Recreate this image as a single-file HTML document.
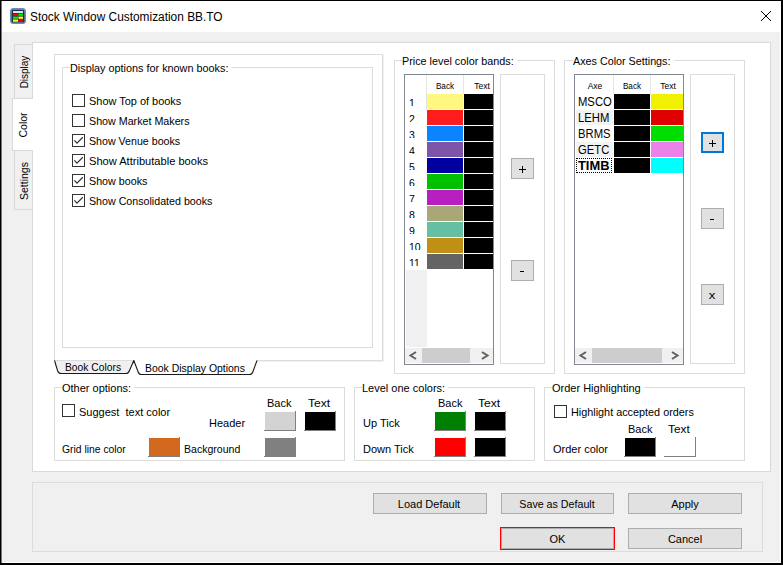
<!DOCTYPE html>
<html><head><meta charset="utf-8"><style>
html,body{margin:0;padding:0;}
body{width:783px;height:565px;position:relative;overflow:hidden;background:#f0f0f0;font-family:"Liberation Sans", sans-serif;color:#000;}
body>div,body>svg{position:absolute;}
.t{white-space:pre;}
</style></head><body>
<div style="left:0px;top:0px;width:783px;height:32px;background:#fff;"></div>
<div style="left:0px;top:0px;width:783px;height:1px;background:#000;"></div>
<div style="left:0px;top:0px;width:1px;height:565px;background:#000;"></div>
<div style="left:1px;top:1px;width:1px;height:564px;background:#777;"></div>
<div style="left:781px;top:0px;width:2px;height:565px;background:#000;"></div>
<div style="left:780px;top:1px;width:1px;height:562px;background:#fff;"></div>
<div style="left:0px;top:563px;width:783px;height:2px;background:#000;"></div>
<div style="left:2px;top:562px;width:779px;height:1px;background:#fff;"></div>
<svg style="left:10px;top:8px" width="16" height="16">
<rect x="0.5" y="0.5" width="15" height="15" rx="2.5" fill="#4f6f9a" stroke="#6d8cb4"/>
<rect x="1.5" y="1.5" width="13" height="3" fill="#9fb4cc" opacity="0.6"/>
<rect x="2" y="2" width="12" height="12" fill="#1e2c44"/>
<rect x="3" y="3" width="10" height="2" fill="#d4e0ff"/>
<rect x="3" y="5.6" width="5" height="2.2" fill="#ff0000"/><rect x="8.4" y="5.6" width="4.6" height="2.2" fill="#00f000"/>
<rect x="3" y="8.6" width="5" height="2.2" fill="#00f000"/><rect x="8.4" y="8.6" width="4.6" height="2.2" fill="#ffff00"/>
<rect x="3" y="11.5" width="5" height="2.2" fill="#ffff00"/><rect x="8.4" y="11.5" width="4.6" height="2.2" fill="#ff0000"/>
</svg>
<div class="t" style="left:30px;top:11px;font-size:12px;line-height:13.80px;transform:scaleX(0.99);transform-origin:0 0;">Stock Window Customization BB.TO</div>
<svg style="left:761px;top:11px" width="10" height="10" shape-rendering="crispEdges"><rect x="0" y="0" width="1" height="1"/><rect x="9" y="0" width="1" height="1"/><rect x="1" y="1" width="1" height="1"/><rect x="8" y="1" width="1" height="1"/><rect x="2" y="2" width="1" height="1"/><rect x="7" y="2" width="1" height="1"/><rect x="3" y="3" width="1" height="1"/><rect x="6" y="3" width="1" height="1"/><rect x="4" y="4" width="1" height="1"/><rect x="5" y="4" width="1" height="1"/><rect x="5" y="5" width="1" height="1"/><rect x="4" y="5" width="1" height="1"/><rect x="6" y="6" width="1" height="1"/><rect x="3" y="6" width="1" height="1"/><rect x="7" y="7" width="1" height="1"/><rect x="2" y="7" width="1" height="1"/><rect x="8" y="8" width="1" height="1"/><rect x="1" y="8" width="1" height="1"/><rect x="9" y="9" width="1" height="1"/><rect x="0" y="9" width="1" height="1"/></svg>
<div style="left:32px;top:42px;width:739px;height:430px;background:#fff;border:1px solid #d9d9d9;box-sizing:border-box;"></div>
<div style="left:14px;top:44px;width:18px;height:55px;background:#f0f0f0;border:1px solid #d9d9d9;border-right:none;box-sizing:border-box;"></div>
<div style="left:14px;top:150px;width:18px;height:60px;background:#f0f0f0;border:1px solid #d9d9d9;border-right:none;box-sizing:border-box;"></div>
<div style="left:12px;top:98px;width:21px;height:53px;background:#fff;border:1px solid #d9d9d9;border-right:none;box-sizing:border-box;"></div>
<div style="left:32px;top:99px;width:1px;height:51px;background:#fff;"></div>
<div class="t" style="left:-26px;top:65.3px;width:100px;height:14px;line-height:14px;text-align:center;font-size:10.5px;transform:rotate(-90deg) scaleX(0.95)">Display</div>
<div class="t" style="left:-27px;top:118px;width:100px;height:14px;line-height:14px;text-align:center;font-size:10.5px;transform:rotate(-90deg) scaleX(1)">Color</div>
<div class="t" style="left:-26px;top:173.5px;width:100px;height:14px;line-height:14px;text-align:center;font-size:10.5px;transform:rotate(-90deg) scaleX(1)">Settings</div>
<div style="left:54px;top:54px;width:329px;height:307px;border:1px solid #dcdcdc;box-sizing:border-box;"></div>
<div style="left:383px;top:55px;width:1px;height:307px;background:#f0f0f0;"></div>
<div style="left:55px;top:361px;width:329px;height:1px;background:#f0f0f0;"></div>
<div style="left:62px;top:67px;width:311px;height:281px;border:1px solid #dcdcdc;box-sizing:border-box;"></div>
<div class="t" style="left:70px;top:62px;font-size:11px;line-height:12.65px;transform:scaleX(0.985);transform-origin:0 0;background:#fff;padding:0 3px 0 0;">Display options for known books:</div>
<div style="left:72px;top:94px;width:13px;height:13px;border:1px solid #333;box-sizing:border-box;background:#fff;"></div>
<div class="t" style="left:89px;top:95px;font-size:11px;line-height:12.65px;transform:scaleX(0.995);transform-origin:0 0;">Show Top of books</div>
<div style="left:72px;top:114px;width:13px;height:13px;border:1px solid #333;box-sizing:border-box;background:#fff;"></div>
<div class="t" style="left:89px;top:115px;font-size:11px;line-height:12.65px;transform:scaleX(0.973);transform-origin:0 0;">Show Market Makers</div>
<div style="left:72px;top:134px;width:13px;height:13px;border:1px solid #333;box-sizing:border-box;background:#fff;"></div>
<svg style="left:72px;top:134px" width="13" height="13"><path d="M2.4 6.4 L5 9.1 L10.8 3.3" fill="none" stroke="#333" stroke-width="1.25"/></svg>
<div class="t" style="left:89px;top:135px;font-size:11px;line-height:12.65px;transform:scaleX(0.968);transform-origin:0 0;">Show Venue books</div>
<div style="left:72px;top:154px;width:13px;height:13px;border:1px solid #333;box-sizing:border-box;background:#fff;"></div>
<svg style="left:72px;top:154px" width="13" height="13"><path d="M2.4 6.4 L5 9.1 L10.8 3.3" fill="none" stroke="#333" stroke-width="1.25"/></svg>
<div class="t" style="left:89px;top:155px;font-size:11px;line-height:12.65px;transform:scaleX(1.008);transform-origin:0 0;">Show Attributable books</div>
<div style="left:72px;top:174px;width:13px;height:13px;border:1px solid #333;box-sizing:border-box;background:#fff;"></div>
<svg style="left:72px;top:174px" width="13" height="13"><path d="M2.4 6.4 L5 9.1 L10.8 3.3" fill="none" stroke="#333" stroke-width="1.25"/></svg>
<div class="t" style="left:89px;top:175px;font-size:11px;line-height:12.65px;transform:scaleX(0.975);transform-origin:0 0;">Show books</div>
<div style="left:72px;top:194px;width:13px;height:13px;border:1px solid #333;box-sizing:border-box;background:#fff;"></div>
<svg style="left:72px;top:194px" width="13" height="13"><path d="M2.4 6.4 L5 9.1 L10.8 3.3" fill="none" stroke="#333" stroke-width="1.25"/></svg>
<div class="t" style="left:89px;top:195px;font-size:11px;line-height:12.65px;transform:scaleX(0.97);transform-origin:0 0;">Show Consolidated books</div>
<svg style="left:0;top:0" width="783" height="565">
<rect x="135" y="360" width="122" height="2" fill="#fff"/>
<path d="M54.8 361 L57.5 370.5 Q58.5 373.5 61 373.5 L126 373.5 Q128.5 373.5 129.5 370.5 L133.6 361 Z" fill="#f0f0f0"/>
<rect x="55" y="360" width="79" height="1" fill="#dcdcdc"/>
<path d="M54.5 360.5 L57.5 370.5 Q58.5 373.5 61 373.5 L126 373.5 Q128.5 373.5 129.5 370.5 L133.8 360.5 L137.8 371 Q138.8 374.5 141.5 374.5 L249.5 374.5 Q252 374.5 253 371.5 L257 360.5" fill="none" stroke="#1a1a1a" stroke-width="1.1" stroke-linejoin="round"/>
</svg>
<div class="t" style="left:65px;top:361px;font-size:11px;line-height:12.65px;transform:scaleX(0.935);transform-origin:0 0;">Book Colors</div>
<div class="t" style="left:145px;top:362px;font-size:11px;line-height:12.65px;transform:scaleX(0.95);transform-origin:0 0;">Book Display Options</div>
<div style="left:394px;top:60px;width:161px;height:314px;border:1px solid #dcdcdc;box-sizing:border-box;"></div>
<div class="t" style="left:402px;top:55px;font-size:11px;line-height:12.65px;transform:scaleX(0.982);transform-origin:0 0;background:#fff;padding:0 3px 0 0;">Price level color bands:</div>
<div style="left:404px;top:74px;width:90px;height:291px;border:1px solid #828790;box-sizing:border-box;background:#fff;"></div>
<div style="left:426px;top:75px;width:1px;height:35px;background:#e5e5e5;"></div>
<div style="left:463px;top:75px;width:1px;height:19px;background:#e5e5e5;"></div>
<div class="t" style="left:295px;width:300px;text-align:center;top:81px;font-size:9.5px;line-height:10.92px;transform:scaleX(0.86);">Back</div>
<div class="t" style="left:331.5px;width:300px;text-align:center;top:81px;font-size:9.5px;line-height:10.92px;transform:scaleX(0.9);">Text</div>
<div style="left:427px;top:94px;width:36px;height:15px;background:#fff77f;"></div>
<div style="left:464px;top:94px;width:29px;height:15px;background:#000;"></div>
<div style="left:409px;top:99px;width:16px;height:7px;overflow:hidden"><div class="t" style="position:absolute;left:0;top:-2px;font-size:10.5px;line-height:12px">1</div></div>
<div style="left:427px;top:110px;width:36px;height:15px;background:#fe1c1c;"></div>
<div style="left:464px;top:110px;width:29px;height:15px;background:#000;"></div>
<div style="left:409px;top:115px;width:16px;height:7px;overflow:hidden"><div class="t" style="position:absolute;left:0;top:-2px;font-size:10.5px;line-height:12px">2</div></div>
<div style="left:427px;top:126px;width:36px;height:15px;background:#0a84ff;"></div>
<div style="left:464px;top:126px;width:29px;height:15px;background:#000;"></div>
<div style="left:409px;top:131px;width:16px;height:7px;overflow:hidden"><div class="t" style="position:absolute;left:0;top:-2px;font-size:10.5px;line-height:12px">3</div></div>
<div style="left:427px;top:142px;width:36px;height:15px;background:#7c55a8;"></div>
<div style="left:464px;top:142px;width:29px;height:15px;background:#000;"></div>
<div style="left:409px;top:147px;width:16px;height:7px;overflow:hidden"><div class="t" style="position:absolute;left:0;top:-2px;font-size:10.5px;line-height:12px">4</div></div>
<div style="left:427px;top:158px;width:36px;height:15px;background:#0000a0;"></div>
<div style="left:464px;top:158px;width:29px;height:15px;background:#000;"></div>
<div style="left:409px;top:163px;width:16px;height:7px;overflow:hidden"><div class="t" style="position:absolute;left:0;top:-2px;font-size:10.5px;line-height:12px">5</div></div>
<div style="left:427px;top:174px;width:36px;height:15px;background:#00c000;"></div>
<div style="left:464px;top:174px;width:29px;height:15px;background:#000;"></div>
<div style="left:409px;top:179px;width:16px;height:7px;overflow:hidden"><div class="t" style="position:absolute;left:0;top:-2px;font-size:10.5px;line-height:12px">6</div></div>
<div style="left:427px;top:190px;width:36px;height:15px;background:#b71fc0;"></div>
<div style="left:464px;top:190px;width:29px;height:15px;background:#000;"></div>
<div style="left:409px;top:195px;width:16px;height:7px;overflow:hidden"><div class="t" style="position:absolute;left:0;top:-2px;font-size:10.5px;line-height:12px">7</div></div>
<div style="left:427px;top:206px;width:36px;height:15px;background:#a9a777;"></div>
<div style="left:464px;top:206px;width:29px;height:15px;background:#000;"></div>
<div style="left:409px;top:211px;width:16px;height:7px;overflow:hidden"><div class="t" style="position:absolute;left:0;top:-2px;font-size:10.5px;line-height:12px">8</div></div>
<div style="left:427px;top:222px;width:36px;height:15px;background:#66bfa3;"></div>
<div style="left:464px;top:222px;width:29px;height:15px;background:#000;"></div>
<div style="left:409px;top:227px;width:16px;height:7px;overflow:hidden"><div class="t" style="position:absolute;left:0;top:-2px;font-size:10.5px;line-height:12px">9</div></div>
<div style="left:427px;top:238px;width:36px;height:15px;background:#bf9014;"></div>
<div style="left:464px;top:238px;width:29px;height:15px;background:#000;"></div>
<div style="left:409px;top:243px;width:16px;height:7px;overflow:hidden"><div class="t" style="position:absolute;left:0;top:-2px;font-size:10.5px;line-height:12px">10</div></div>
<div style="left:427px;top:254px;width:36px;height:15px;background:#646464;"></div>
<div style="left:464px;top:254px;width:29px;height:15px;background:#000;"></div>
<div style="left:409px;top:259px;width:16px;height:7px;overflow:hidden"><div class="t" style="position:absolute;left:0;top:-2px;font-size:10.5px;line-height:12px">11</div></div>
<div style="left:406px;top:270px;width:21px;height:77px;background:#f0f0f0;"></div>
<div style="left:405px;top:348px;width:88px;height:15px;background:#f0f0f0;"></div>
<div style="left:422px;top:348px;width:48px;height:15px;background:#cdcdcd;"></div>
<div style="left:500px;top:74px;width:45px;height:290px;border:1px solid #dcdcdc;box-sizing:border-box;"></div>
<div style="left:511px;top:158px;width:23px;height:21px;background:#e1e1e1;box-sizing:border-box;border:1px solid #adadad;"></div>
<div style="left:519px;top:169px;width:7px;height:1px;background:#000;"></div>
<div style="left:522px;top:166px;width:1px;height:7px;background:#000;"></div>
<div style="left:511px;top:260px;width:23px;height:21px;background:#e1e1e1;box-sizing:border-box;border:1px solid #adadad;"></div>
<div style="left:520px;top:271px;width:4px;height:1px;background:#000;"></div>
<div style="left:564px;top:60px;width:181px;height:314px;border:1px solid #dcdcdc;box-sizing:border-box;"></div>
<div class="t" style="left:573px;top:55px;font-size:11px;line-height:12.65px;transform:scaleX(0.978);transform-origin:0 0;background:#fff;padding:0 3px 0 0;">Axes Color Settings:</div>
<div style="left:574px;top:74px;width:110px;height:291px;border:1px solid #828790;box-sizing:border-box;background:#fff;"></div>
<div style="left:613px;top:75px;width:1px;height:19px;background:#e5e5e5;"></div>
<div style="left:650px;top:75px;width:1px;height:19px;background:#e5e5e5;"></div>
<div class="t" style="left:444.5px;width:300px;text-align:center;top:81px;font-size:9.5px;line-height:10.92px;transform:scaleX(0.9);">Axe</div>
<div class="t" style="left:482px;width:300px;text-align:center;top:81px;font-size:9.5px;line-height:10.92px;transform:scaleX(0.86);">Back</div>
<div class="t" style="left:518px;width:300px;text-align:center;top:81px;font-size:9.5px;line-height:10.92px;transform:scaleX(0.9);">Text</div>
<div style="left:614px;top:94px;width:36px;height:15px;background:#000;"></div>
<div style="left:651px;top:94px;width:32px;height:15px;background:#f0f000;"></div>
<div class="t" style="left:578px;top:95px;font-size:12.5px;line-height:14.37px;transform:scaleX(0.9);transform-origin:0 0;">MSCO</div>
<div style="left:576px;top:110px;width:37px;height:15px;background:#f3f3f3;"></div>
<div style="left:614px;top:110px;width:36px;height:15px;background:#000;"></div>
<div style="left:651px;top:110px;width:32px;height:15px;background:#e00000;"></div>
<div class="t" style="left:578px;top:111px;font-size:12.5px;line-height:14.37px;transform:scaleX(0.9);transform-origin:0 0;">LEHM</div>
<div style="left:614px;top:126px;width:36px;height:15px;background:#000;"></div>
<div style="left:651px;top:126px;width:32px;height:15px;background:#00dd00;"></div>
<div class="t" style="left:578px;top:127px;font-size:12.5px;line-height:14.37px;transform:scaleX(0.9);transform-origin:0 0;">BRMS</div>
<div style="left:576px;top:142px;width:37px;height:15px;background:#f3f3f3;"></div>
<div style="left:614px;top:142px;width:36px;height:15px;background:#000;"></div>
<div style="left:651px;top:142px;width:32px;height:15px;background:#ea82ea;"></div>
<div class="t" style="left:578px;top:143px;font-size:12.5px;line-height:14.37px;transform:scaleX(0.9);transform-origin:0 0;">GETC</div>
<div style="left:614px;top:158px;width:36px;height:15px;background:#000;"></div>
<div style="left:651px;top:158px;width:32px;height:15px;background:#00ffff;"></div>
<div style="left:576px;top:158px;width:36px;height:15px;border:1px dotted #000;box-sizing:border-box;"></div>
<div class="t" style="left:578px;top:159px;font-size:12.5px;line-height:14.37px;transform:scaleX(1.03);transform-origin:0 0;font-weight:bold;">TIMB</div>
<div style="left:575px;top:348px;width:108px;height:15px;background:#f0f0f0;"></div>
<div style="left:592px;top:348px;width:70px;height:15px;background:#cdcdcd;"></div>
<div style="left:690px;top:74px;width:45px;height:290px;border:1px solid #dcdcdc;box-sizing:border-box;"></div>
<div style="left:701px;top:132px;width:23px;height:21px;background:#e1e1e1;box-sizing:border-box;border:2px solid #0078d7;"></div>
<div style="left:709px;top:143px;width:7px;height:1px;background:#000;"></div>
<div style="left:712px;top:140px;width:1px;height:7px;background:#000;"></div>
<div style="left:701px;top:208px;width:23px;height:21px;background:#e1e1e1;box-sizing:border-box;border:1px solid #adadad;"></div>
<div style="left:710px;top:219px;width:4px;height:1px;background:#000;"></div>
<div style="left:701px;top:284px;width:23px;height:21px;background:#e1e1e1;box-sizing:border-box;border:1px solid #adadad;"></div>
<div class="t" style="left:562.0px;width:300px;text-align:center;top:289px;font-size:11px;line-height:12.65px;transform:scaleX(1.2);">x</div>
<svg style="left:0;top:0" width="783" height="565"><path d="M416 352.0 L410.5 355.5 L416 359.0 M482 352.0 L487.5 355.5 L482 359.0 M586 352.0 L580.5 355.5 L586 359.0 M672 352.0 L677.5 355.5 L672 359.0" fill="none" stroke="#606060" stroke-width="2"/></svg>
<div style="left:54px;top:387px;width:291px;height:74px;border:1px solid #dcdcdc;box-sizing:border-box;"></div>
<div class="t" style="left:62px;top:382px;font-size:11px;line-height:12.65px;background:#fff;padding:0 3px 0 0;">Other options:</div>
<div style="left:62px;top:404px;width:13px;height:13px;border:1px solid #333;box-sizing:border-box;background:#fff;"></div>
<div class="t" style="left:79px;top:406px;font-size:11px;line-height:12.65px;">Suggest&nbsp; text color</div>
<div class="t" style="left:62px;top:443px;font-size:11px;line-height:12.65px;transform:scaleX(0.94);transform-origin:0 0;">Grid line color</div>
<div class="t" style="left:209px;top:417px;font-size:11px;line-height:12.65px;">Header</div>
<div class="t" style="left:184px;top:443px;font-size:11px;line-height:12.65px;transform:scaleX(0.96);transform-origin:0 0;">Background</div>
<div class="t" style="left:267px;top:397px;font-size:11px;line-height:12.65px;">Back</div>
<div class="t" style="left:308px;top:397px;font-size:11px;line-height:12.65px;transform:scaleX(1.1);transform-origin:0 0;">Text</div>
<div style="left:149px;top:438px;width:30px;height:18px;background:#d2691e;"></div>
<div style="left:179px;top:437px;width:1px;height:20px;background:#808080;"></div>
<div style="left:148px;top:456px;width:31px;height:1px;background:#808080;"></div>
<div style="left:265px;top:412px;width:30px;height:18px;background:#d3d3d3;"></div>
<div style="left:295px;top:411px;width:1px;height:20px;background:#808080;"></div>
<div style="left:264px;top:430px;width:31px;height:1px;background:#808080;"></div>
<div style="left:305px;top:412px;width:30px;height:18px;background:#000;"></div>
<div style="left:335px;top:411px;width:1px;height:20px;background:#808080;"></div>
<div style="left:304px;top:430px;width:31px;height:1px;background:#808080;"></div>
<div style="left:265px;top:438px;width:30px;height:18px;background:#808080;"></div>
<div style="left:295px;top:437px;width:1px;height:20px;background:#808080;"></div>
<div style="left:264px;top:456px;width:31px;height:1px;background:#808080;"></div>
<div style="left:354px;top:387px;width:181px;height:74px;border:1px solid #dcdcdc;box-sizing:border-box;"></div>
<div class="t" style="left:362px;top:382px;font-size:11px;line-height:12.65px;background:#fff;padding:0 3px 0 0;">Level one colors:</div>
<div class="t" style="left:438px;top:397px;font-size:11px;line-height:12.65px;">Back</div>
<div class="t" style="left:478px;top:397px;font-size:11px;line-height:12.65px;transform:scaleX(1.1);transform-origin:0 0;">Text</div>
<div class="t" style="left:363px;top:417px;font-size:11px;line-height:12.65px;">Up Tick</div>
<div class="t" style="left:363px;top:443px;font-size:11px;line-height:12.65px;">Down Tick</div>
<div style="left:435px;top:412px;width:30px;height:18px;background:#008000;"></div>
<div style="left:465px;top:411px;width:1px;height:20px;background:#808080;"></div>
<div style="left:434px;top:430px;width:31px;height:1px;background:#808080;"></div>
<div style="left:475px;top:412px;width:30px;height:18px;background:#000;"></div>
<div style="left:505px;top:411px;width:1px;height:20px;background:#808080;"></div>
<div style="left:474px;top:430px;width:31px;height:1px;background:#808080;"></div>
<div style="left:435px;top:438px;width:30px;height:18px;background:#ff0000;"></div>
<div style="left:465px;top:437px;width:1px;height:20px;background:#808080;"></div>
<div style="left:434px;top:456px;width:31px;height:1px;background:#808080;"></div>
<div style="left:475px;top:438px;width:30px;height:18px;background:#000;"></div>
<div style="left:505px;top:437px;width:1px;height:20px;background:#808080;"></div>
<div style="left:474px;top:456px;width:31px;height:1px;background:#808080;"></div>
<div style="left:544px;top:387px;width:201px;height:74px;border:1px solid #dcdcdc;box-sizing:border-box;"></div>
<div class="t" style="left:552px;top:382px;font-size:11px;line-height:12.65px;background:#fff;padding:0 3px 0 0;">Order Highlighting</div>
<div style="left:554px;top:405px;width:13px;height:13px;border:1px solid #333;box-sizing:border-box;background:#fff;"></div>
<div class="t" style="left:571px;top:406px;font-size:11px;line-height:12.65px;transform:scaleX(0.985);transform-origin:0 0;">Highlight accepted orders</div>
<div class="t" style="left:628px;top:423px;font-size:11px;line-height:12.65px;">Back</div>
<div class="t" style="left:668px;top:423px;font-size:11px;line-height:12.65px;transform:scaleX(1.08);transform-origin:0 0;">Text</div>
<div class="t" style="left:553px;top:443px;font-size:11px;line-height:12.65px;">Order color</div>
<div style="left:625px;top:438px;width:30px;height:18px;background:#000;"></div>
<div style="left:655px;top:437px;width:1px;height:20px;background:#808080;"></div>
<div style="left:624px;top:456px;width:31px;height:1px;background:#808080;"></div>
<div style="left:665px;top:438px;width:30px;height:18px;background:#fff;"></div>
<div style="left:695px;top:437px;width:1px;height:20px;background:#808080;"></div>
<div style="left:664px;top:456px;width:31px;height:1px;background:#808080;"></div>
<div style="left:32px;top:482px;width:731px;height:70px;border:1px solid #dcdcdc;box-sizing:border-box;"></div>
<div style="left:373px;top:493px;width:114px;height:21px;background:#e1e1e1;box-sizing:border-box;border:1px solid #adadad;"></div>
<div class="t" style="left:279.0px;width:300px;text-align:center;top:498px;font-size:11px;line-height:12.65px;">Load Default</div>
<div style="left:501px;top:493px;width:113px;height:21px;background:#e1e1e1;box-sizing:border-box;border:1px solid #adadad;"></div>
<div class="t" style="left:406.5px;width:300px;text-align:center;top:498px;font-size:11px;line-height:12.65px;transform:scaleX(0.97);">Save as Default</div>
<div style="left:628px;top:493px;width:114px;height:21px;background:#e1e1e1;box-sizing:border-box;border:1px solid #adadad;"></div>
<div class="t" style="left:535.0px;width:300px;text-align:center;top:498px;font-size:11px;line-height:12.65px;">Apply</div>
<div style="left:500px;top:527px;width:115px;height:23px;border:1px solid #f00;box-sizing:border-box;"></div>
<div style="left:501px;top:528px;width:113px;height:21px;background:#e1e1e1;box-sizing:border-box;border:1px solid #adadad;"></div>
<div class="t" style="left:407.5px;width:300px;text-align:center;top:533px;font-size:11px;line-height:12.65px;">OK</div>
<div style="left:628px;top:528px;width:114px;height:21px;background:#e1e1e1;box-sizing:border-box;border:1px solid #adadad;"></div>
<div class="t" style="left:535.0px;width:300px;text-align:center;top:533px;font-size:11px;line-height:12.65px;">Cancel</div>
</body></html>
